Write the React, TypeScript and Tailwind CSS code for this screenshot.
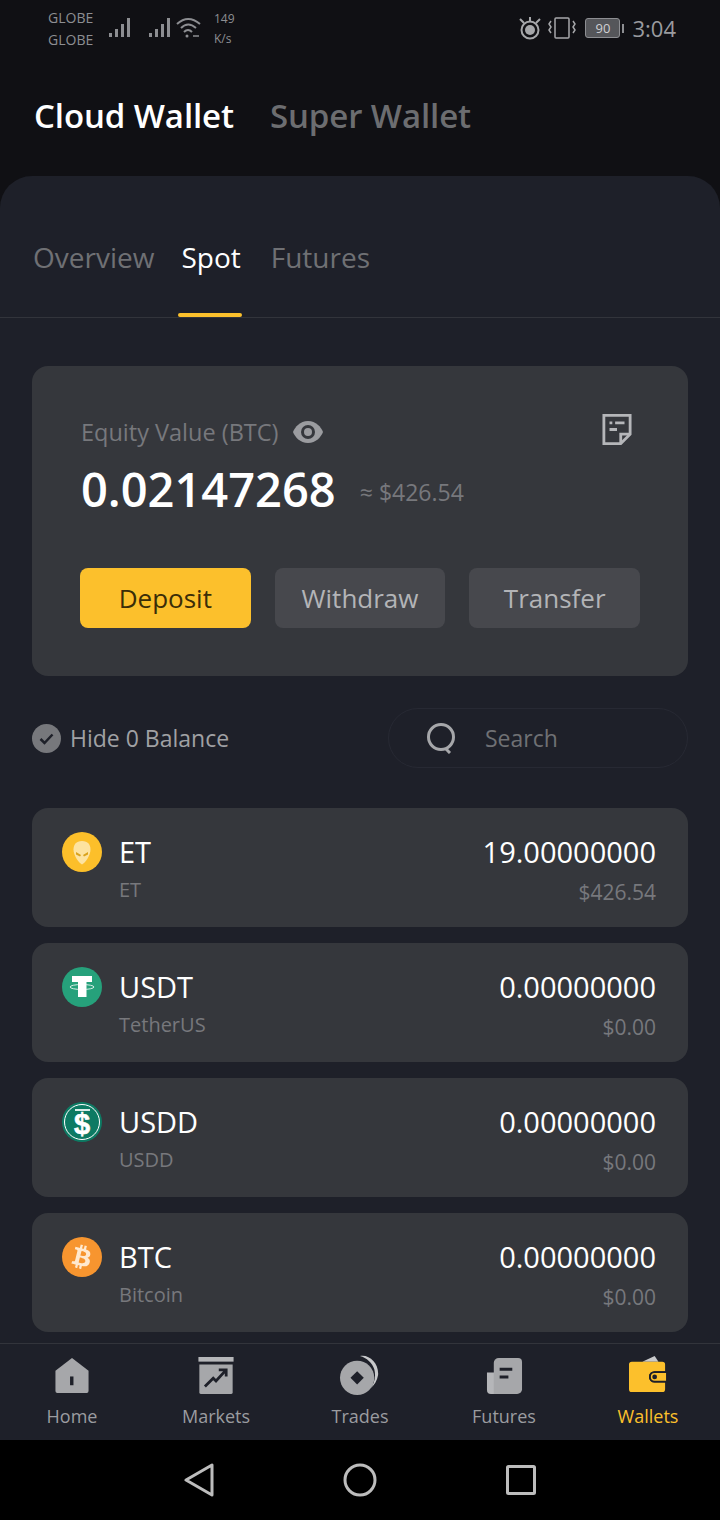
import type { ReactNode } from 'react';
import { FaBtc } from 'react-icons/fa';

const FONT = 'font-["Open_Sans","Liberation_Sans",sans-serif]';

const COINS = [
  { symbol: 'ET', name: 'ET', amount: '19.00000000', value: '$426.54', icon: 'et' },
  { symbol: 'USDT', name: 'TetherUS', amount: '0.00000000', value: '$0.00', icon: 'usdt' },
  { symbol: 'USDD', name: 'USDD', amount: '0.00000000', value: '$0.00', icon: 'usdd' },
  { symbol: 'BTC', name: 'Bitcoin', amount: '0.00000000', value: '$0.00', icon: 'btc' },
];

function SignalBars() {
  return (
    <svg width="24" height="22" viewBox="0 0 24 22" fill="#8d8e92">
      <rect x="1" y="16" width="3" height="4" />
      <rect x="7" y="12" width="3" height="8" />
      <rect x="13" y="7" width="3" height="13" />
      <rect x="19" y="1" width="3" height="19" />
    </svg>
  );
}

function StatusBar() {
  return (
    <div className="flex h-[64px] items-center justify-between pb-[8px] pl-[48px] pr-[44px] text-[#8d8e92]">
      <div className="flex items-center">
        <div className="flex w-[48px] flex-col gap-[5px] text-[14px] leading-[17px]">
          <span>GLOBE</span>
          <span>GLOBE</span>
        </div>
        <div className="ml-[12px] flex items-center gap-[16px]">
          <SignalBars />
          <SignalBars />
        </div>
        <svg className="ml-[4px]" width="26" height="24" viewBox="0 0 26 24" fill="none" stroke="#8d8e92" strokeWidth="2">
          <path d="M1 8 Q12 -2 24 8" />
          <path d="M5 12 Q12 5 20 12" />
          <path d="M8 16 Q12 12 16 16" />
          <circle cx="11" cy="20" r="1.500" fill="#8d8e92" stroke="none" />
          <path d="M17 20h6" strokeWidth="1.500" />
        </svg>
        <div className="ml-[12px] flex flex-col gap-[5px] text-[12px] leading-[15px]">
          <span>149</span>
          <span>K/s</span>
        </div>
      </div>
      <div className="flex items-center">
        <svg width="24" height="24" viewBox="0 0 24 24" fill="none" stroke="#a6a7aa" strokeWidth="2">
          <path d="M2 3l4 4M22 3l-4 4M12 1v4" />
          <circle cx="12" cy="14" r="8.500" />
          <circle cx="12" cy="14" r="5" fill="#a6a7aa" stroke="none" />
        </svg>
        <svg className="ml-[6px]" width="28" height="22" viewBox="0 0 28 22" fill="none" stroke="#a6a7aa" strokeWidth="1.500">
          <rect x="7" y="1" width="14" height="20" rx="1" />
          <path d="M3 4l-2 3 2 3-2 3 2 3M25 4l2 3-2 3 2 3-2 3" />
        </svg>
        <div className="relative ml-[9px] flex h-[20px] w-[35px] items-center justify-center rounded-[3px] border border-[#8d8e92] bg-[#55565a] text-[13px] leading-none text-[#d0d0d2]">
          90
          <span className="absolute right-[-5px] top-[5px] h-[9px] w-[2px] bg-[#8d8e92]" />
        </div>
        <span className="ml-[12px] text-[22px] leading-none text-[#9a9b9f]">3:04</span>
      </div>
    </div>
  );
}

function Coin({ kind }: { kind: string }) {
  if (kind === 'et') {
    return (
      <svg width="40" height="40" viewBox="0 0 40 40">
        <circle cx="20" cy="20" r="20" fill="#fcbf2a" />
        <path d="M20 9c6 0 8.500 4 8.500 8.500 0 6-5 13-8.500 15-3.500-2-8.500-9-8.500-15C11.500 13 14 9 20 9z" fill="#fde3a0" />
        <path d="M14 20l5 3-1 1.500-4-2zM26 20l-5 3 1 1.500 4-2z" fill="#d9a21c" />
      </svg>
    );
  }
  if (kind === 'usdt') {
    return (
      <svg width="40" height="40" viewBox="0 0 40 40">
        <circle cx="20" cy="20" r="20" fill="#26a17b" />
        <path d="M10 9h20v6h-5.500v15h-8.500V15H10z" fill="#fff" />
        <ellipse cx="20" cy="20" rx="12" ry="2.500" fill="none" stroke="#fff" strokeWidth="0.800" />
      </svg>
    );
  }
  if (kind === 'usdd') {
    return (
      <svg width="40" height="40" viewBox="0 0 40 40">
        <circle cx="20" cy="20" r="20" fill="#0d7a63" />
        <circle cx="20" cy="20" r="17.500" fill="none" stroke="#fff" strokeWidth="1" />
        <rect x="13" y="7" width="15" height="2" fill="#d8ece7" />
        <text x="20" y="32" textAnchor="middle" fontSize="29" fontWeight="700" fontFamily="Liberation Sans, sans-serif" fill="#fff" stroke="#fff" strokeWidth="0.600">$</text>
      </svg>
    );
  }
  return (
    <div className="flex h-[40px] w-[40px] items-center justify-center rounded-full bg-[#f7952f] text-[#ffe9cf]">
      <FaBtc size={24} className="rotate-[14deg]" />
    </div>
  );
}

function CoinRow({ symbol, name, amount, value, icon }: (typeof COINS)[number]) {
  return (
    <div className="flex h-[119px] rounded-[16px] bg-[#35373c] pl-[30px] pr-[32px] pt-[24px]">
      <Coin kind={icon} />
      <div className="ml-[17px] pt-[2px]">
        <div className="text-[29px] leading-[36px] text-white">{symbol}</div>
        <div className="mt-[7px] text-[20px] leading-[26px] text-[#77787c]">{name}</div>
      </div>
      <div className="ml-auto pt-[2px] text-right">
        <div className="text-[29px] leading-[36px] text-white">{amount}</div>
        <div className="mt-[9px] text-[21px] leading-[26px] text-[#77787c]">{value}</div>
      </div>
    </div>
  );
}

function NavItem({ label, active, children }: { label: string; active?: boolean; children: ReactNode }) {
  return (
    <div className={`flex flex-1 flex-col items-center ${active ? 'text-[#fcc02c]' : 'text-[#9b9ca0]'}`}>
      <div className="flex h-[50px] items-center">{children}</div>
      <span className="mt-[4px] text-[18px] leading-[24px]">{label}</span>
    </div>
  );
}

export default function App() {
  return (
    <div className={`flex h-[1520px] w-[720px] flex-col overflow-hidden bg-[#101014] ${FONT}`}>
      <StatusBar />

      <div className="flex h-[112px] items-start gap-[36px] pl-[34px] pt-[32px] text-[33px] leading-[40px] tracking-[-0.1px]">
        <span className="font-semibold text-white">Cloud Wallet</span>
        <span className="font-semibold text-[#6c6d70]">Super Wallet</span>
      </div>

      <div className="flex min-h-0 flex-1 flex-col rounded-t-[32px] bg-[#1e2029]">
        {/* Tabs */}
        <div className="flex h-[142px] shrink-0 items-end border-b border-[#32343b] pl-[33px] text-[28px] leading-[36px]">
          <div className="pb-[42px] text-[#6f7074]">Overview</div>
          <div className="relative ml-[27px] pb-[42px] text-white">
            Spot
            <span className="absolute bottom-0 left-[-3px] h-[4px] w-[64px] rounded-full bg-[#fcc02c]" />
          </div>
          <div className="ml-[30px] pb-[42px] text-[#6f7074]">Futures</div>
        </div>

        <div className="flex min-h-0 flex-1 flex-col px-[32px] pt-[48px]">
          {/* Balance card */}
          <div className="h-[310px] shrink-0 rounded-[16px] bg-[#35373c] px-[48px] pt-[48px]">
            <div className="flex items-start justify-between">
              <div className="flex items-center gap-[13px] pl-[1px] text-[23.500px] leading-[36px] text-[#77787c]">
                Equity Value (BTC)
                <svg width="32" height="24" viewBox="0 0 32 24">
                  <path d="M16 1C8 1 3 7 1 12c2 5 7 11 15 11s13-6 15-11C29 7 24 1 16 1z" fill="#9b9ca0" />
                  <circle cx="16" cy="12" r="7" fill="#35373c" />
                  <circle cx="16" cy="12" r="4" fill="#9b9ca0" />
                </svg>
              </div>
              <svg className="mr-[8px] mt-[-1px]" width="30" height="33" viewBox="0 0 32 34" fill="none" stroke="#b5b6b9" strokeWidth="3">
                <path d="M2 2h28v20L20 32H2z" />
                <path d="M20 32V22h10" />
                <path d="M8 10h3M14 10h10M8 17h8" />
              </svg>
            </div>
            <div className="mt-[11px] flex items-end">
              <span className="pl-[1px] text-[47px] font-semibold leading-[56px] text-white">0.02147268</span>
              <span className="mb-[10px] ml-[24px] text-[23px] leading-[30px] text-[#77787c]">≈ $426.54</span>
            </div>
            <div className="mt-[51px] flex gap-[24px]">
              <div className="flex h-[60px] flex-1 items-center justify-center rounded-[8px] bg-[#fcc02c] text-[26px] text-[#3a2d08]">Deposit</div>
              <div className="flex h-[60px] flex-1 items-center justify-center rounded-[8px] bg-[#47484d] text-[26px] text-[#b3b4b7]">Withdraw</div>
              <div className="flex h-[60px] flex-1 items-center justify-center rounded-[8px] bg-[#47484d] text-[26px] text-[#b3b4b7]">Transfer</div>
            </div>
          </div>

          {/* Filter row */}
          <div className="mt-[32px] flex h-[60px] shrink-0 items-center justify-between">
            <div className="flex items-center gap-[9px] text-[23px] text-[#a0a1a4]">
              <svg width="29" height="29" viewBox="0 0 29 29">
                <circle cx="14.500" cy="14.500" r="14.500" fill="#77787c" />
                <path d="M8.500 15l4 4 8-8.500" fill="none" stroke="#1e2029" strokeWidth="2.500" />
              </svg>
              Hide 0 Balance
            </div>
            <div className="flex h-[60px] w-[300px] items-center rounded-full border border-[#272933] pl-[37px] text-[23px] text-[#6f7074]">
              <svg width="30" height="32" viewBox="0 0 30 32" fill="none" stroke="#a6a7aa" strokeWidth="3">
                <circle cx="15" cy="15" r="12.500" />
                <path d="M20 27l4 4" />
              </svg>
              <span className="ml-[29px]">Search</span>
            </div>
          </div>

          {/* Coins */}
          <div className="mt-[40px] flex flex-col gap-[16px]">
            {COINS.map((coin) => (
              <CoinRow key={coin.symbol} {...coin} />
            ))}
          </div>
        </div>

        {/* Bottom nav */}
        <div className="flex h-[97px] shrink-0 border-t border-[#32343b] bg-[#1e2029] pt-[6px]">
          <NavItem label="Home">
            <svg width="36" height="37" viewBox="0 0 36 38">
              <path d="M18 1l17 13v21a2 2 0 0 1-2 2H3a2 2 0 0 1-2-2V14z" fill="#a6a7aa" />
              <rect x="16" y="20" width="3.500" height="9" fill="#1e2029" />
            </svg>
          </NavItem>
          <NavItem label="Markets">
            <svg width="38" height="37" viewBox="0 0 38 40">
              <rect x="0" y="0" width="38" height="5" fill="#b5b6b9" />
              <path d="M1 8h36v30a2 2 0 0 1-2 2H3a2 2 0 0 1-2-2z" fill="#a6a7aa" />
              <path d="M7 32l9-9 3 3 10-11M22 14h8v7" fill="none" stroke="#1e2029" strokeWidth="3" />
            </svg>
          </NavItem>
          <NavItem label="Trades">
            <svg width="42" height="40" viewBox="0 0 44 42">
              <path d="M22 1c10-2 20 8 19 20-1 6-4 11-8 14 4-5 6-12 4-20C35 8 29 3 22 1z" fill="#c8c9cb" />
              <ellipse cx="19" cy="24" rx="18" ry="18" fill="#a6a7aa" />
              <path d="M19 17l7 7-7 7-7-7z" fill="#1e2029" />
            </svg>
          </NavItem>
          <NavItem label="Futures">
            <svg width="37" height="37" viewBox="0 0 38 38">
              <path d="M1 16h9v22H5a4 4 0 0 1-4-4z" fill="#b5b6b9" />
              <path d="M8 6a5 5 0 0 1 5-5h20a4 4 0 0 1 4 4v28a5 5 0 0 1-5 5H8z" fill="#a6a7aa" />
              <path d="M14 11h13v3H14zM14 19h9v3h-9z" fill="#1e2029" />
            </svg>
          </NavItem>
          <NavItem label="Wallets" active>
            <svg width="40" height="38" viewBox="0 0 40 40">
              <path d="M14 6L27 0l4 6z" fill="#c8c9cb" />
              <path d="M3 6h32a3 3 0 0 1 3 3v7H27a6 6 0 0 0 0 12h11v7a3 3 0 0 1-3 3H3a3 3 0 0 1-3-3V9a3 3 0 0 1 3-3z" fill="#fcc02c" />
              <path d="M27 17h13v10H27a5 5 0 0 1 0-10z" fill="#fcc02c" stroke="#1e2029" strokeWidth="2" />
              <circle cx="27" cy="22" r="2.500" fill="#1e2029" />
            </svg>
          </NavItem>
        </div>
      </div>

      {/* Android nav bar */}
      <div className="flex h-[80px] shrink-0 items-center justify-center gap-[129px] bg-black pr-[1px]">
        <svg width="30" height="34" viewBox="0 0 30 34" fill="none" stroke="#bdbdbd" strokeWidth="3" strokeLinejoin="round">
          <path d="M28 2v30L2 17z" />
        </svg>
        <svg width="34" height="34" viewBox="0 0 34 34" fill="none" stroke="#bdbdbd" strokeWidth="3">
          <circle cx="17" cy="17" r="15" />
        </svg>
        <svg width="30" height="30" viewBox="0 0 30 30" fill="none" stroke="#bdbdbd" strokeWidth="3">
          <rect x="1.500" y="1.500" width="27" height="27" rx="1" />
        </svg>
      </div>
    </div>
  );
}
